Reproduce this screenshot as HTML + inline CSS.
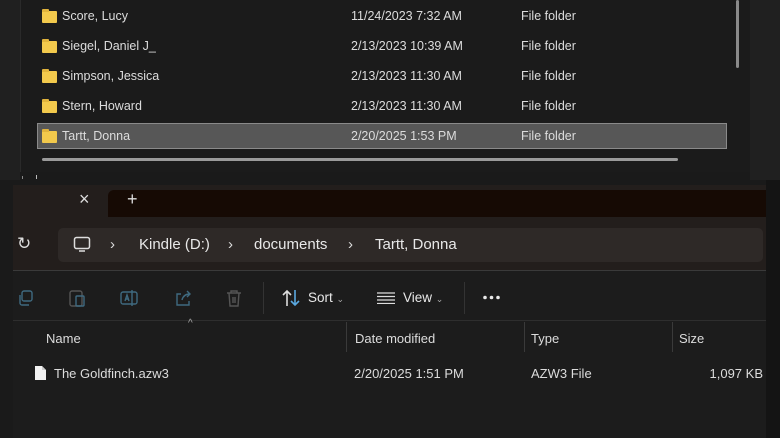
<!DOCTYPE html>
<html><head><style>
*{margin:0;padding:0;box-sizing:border-box}
body{width:780px;height:438px;background:#1a1a1a;position:relative;overflow:hidden;font-family:"Liberation Sans",sans-serif;color:#e8e8e8}
.a{position:absolute}
.t{font-size:12.5px;color:#dcdcdc;white-space:nowrap}
.fold{position:absolute;width:15px;height:12px;background:#f2c94c;border-radius:1px}
.fold:before{content:"";position:absolute;left:0;top:-2px;width:7px;height:3px;background:#e0b33c;border-radius:1px 1px 0 0}
</style></head><body>
<div class="a" style="left:0;top:0;width:20px;height:180px;background:#202020"></div>
<div class="a" style="left:20px;top:0;width:730px;height:172px;background:#1b1b1b;border-left:1px solid #2a2a2a"></div>
<div class="a" style="left:750px;top:0;width:30px;height:180px;background:#202020"></div>
<div class="a" style="left:736px;top:0;width:3px;height:68px;background:#8a8a8a;border-radius:2px"></div>
<div class="a" style="left:37px;top:123px;width:690px;height:26px;background:#575757;border:1px solid #8a8a8a"></div>
<div class="a" style="left:42px;top:158px;width:636px;height:3px;background:#9a9a9a;border-radius:2px"></div>
<div class="a" style="left:22px;top:176px;width:1px;height:3px;background:#888"></div>
<div class="a" style="left:36px;top:175px;width:1px;height:4px;background:#bbb"></div>
<div class="fold" style="left:42px;top:11px"></div><div class="a t" style="left:62px;top:9px">Score, Lucy</div><div class="a t" style="left:351px;top:9px">11/24/2023 7:32 AM</div><div class="a t" style="left:521px;top:9px">File folder</div>
<div class="fold" style="left:42px;top:41px"></div><div class="a t" style="left:62px;top:39px">Siegel, Daniel J_</div><div class="a t" style="left:351px;top:39px">2/13/2023 10:39 AM</div><div class="a t" style="left:521px;top:39px">File folder</div>
<div class="fold" style="left:42px;top:71px"></div><div class="a t" style="left:62px;top:69px">Simpson, Jessica</div><div class="a t" style="left:351px;top:69px">2/13/2023 11:30 AM</div><div class="a t" style="left:521px;top:69px">File folder</div>
<div class="fold" style="left:42px;top:101px"></div><div class="a t" style="left:62px;top:99px">Stern, Howard</div><div class="a t" style="left:351px;top:99px">2/13/2023 11:30 AM</div><div class="a t" style="left:521px;top:99px">File folder</div>
<div class="fold" style="left:42px;top:131px"></div><div class="a t" style="left:62px;top:129px">Tartt, Donna</div><div class="a t" style="left:351px;top:129px">2/20/2025 1:53 PM</div><div class="a t" style="left:521px;top:129px">File folder</div>
<div class="a" style="left:13px;top:185px;width:753px;height:90px;background:#231e1c"></div>
<div class="a" style="left:108px;top:190px;width:658px;height:27px;background:#160a04;border-radius:6px 0 0 0"></div>
<div class="a" style="left:79px;top:189px;font-size:18px;color:#ddd">×</div>
<div class="a" style="left:127px;top:189px;font-size:18px;color:#ddd">+</div>
<div class="a" style="left:58px;top:228px;width:705px;height:34px;background:#2e2927;border-radius:5px"></div>
<div class="a" style="left:17px;top:234px;font-size:17px;color:#ddd">↻</div>
<svg class="a" style="left:73px;top:236px" width="18" height="17"><rect x="1.5" y="1.5" width="15" height="11" rx="2" fill="none" stroke="#ddd" stroke-width="1.5"/><path d="M6 15h6" stroke="#ddd" stroke-width="1.5"/></svg>
<div class="a" style="top:236px;left:110px;font-size:15px;color:#ddd">›</div>
<div class="a" style="top:236px;left:139px;font-size:15px;color:#e8e8e8">Kindle (D:)</div>
<div class="a" style="top:236px;left:228px;font-size:15px;color:#ddd">›</div>
<div class="a" style="top:236px;left:254px;font-size:15px;color:#e8e8e8">documents</div>
<div class="a" style="top:236px;left:348px;font-size:15px;color:#ddd">›</div>
<div class="a" style="top:236px;left:375px;font-size:15px;color:#e8e8e8">Tartt, Donna</div>
<div class="a" style="left:13px;top:270px;width:753px;height:1px;background:#3a3a3a"></div>
<div class="a" style="left:13px;top:271px;width:753px;height:167px;background:#1c1c1c"></div>
<div class="a" style="left:766px;top:180px;width:14px;height:258px;background:#141414"></div>
<svg class="a" style="left:16px;top:289px" width="18" height="18" fill="none" stroke="#3f6a80" stroke-width="1.4"><rect x="6" y="2" width="10" height="10" rx="2"/><path d="M4 6v8a2 2 0 0 0 2 2h7"/></svg>
<svg class="a" style="left:68px;top:288px" width="18" height="20" fill="none" stroke="#555" stroke-width="1.4"><rect x="2" y="3" width="12" height="15" rx="2"/><rect x="8" y="8" width="8" height="10" rx="1" stroke="#3f6a80"/></svg>
<svg class="a" style="left:119px;top:288px" width="20" height="20" fill="none" stroke="#3f6a80" stroke-width="1.4"><rect x="2" y="4" width="16" height="12" rx="2"/><path d="M6 13l2-6 2 6M7 11h2M13 2v16"/></svg>
<svg class="a" style="left:173px;top:288px" width="20" height="20" fill="none" stroke="#3f6a80" stroke-width="1.4"><path d="M8 6H4v11h12v-4"/><path d="M9 12c1-4 4-6 8-6M14 3l3 3-3 3"/></svg>
<svg class="a" style="left:225px;top:288px" width="18" height="20" fill="none" stroke="#555" stroke-width="1.4"><path d="M2 5h14M6 5V3h6v2M4 5l1 13h8l1-13M8 9v6M10 9v6"/></svg>
<div class="a" style="left:263px;top:282px;width:1px;height:32px;background:#333"></div>
<svg class="a" style="left:281px;top:288px" width="20" height="20" fill="none" stroke-width="1.6"><path d="M6 18V3M2 7l4-4 4 4" stroke="#ddd"/><path d="M14 2v15M10 13l4 4 4-4" stroke="#5aa8e0"/></svg>
<div class="a" style="left:308px;top:290px;font-size:13.5px">Sort <span style="font-size:9px;color:#aaa">⌄</span></div>
<svg class="a" style="left:377px;top:292px" width="18" height="12" stroke="#ddd" stroke-width="1.3"><path d="M0 1h18M0 4.5h18M0 8h18M0 11.5h18"/></svg>
<div class="a" style="left:403px;top:290px;font-size:13.5px">View <span style="font-size:9px;color:#aaa">⌄</span></div>
<div class="a" style="left:464px;top:282px;width:1px;height:32px;background:#333"></div>
<svg class="a" style="left:482px;top:295px" width="20" height="5" fill="#e8e8e8"><circle cx="3" cy="2.5" r="1.8"/><circle cx="9.5" cy="2.5" r="1.8"/><circle cx="16" cy="2.5" r="1.8"/></svg>
<div class="a" style="left:13px;top:320px;width:753px;height:1px;background:#2e2e2e"></div>
<div class="a" style="left:188px;top:318px;font-size:10px;color:#aaa">^</div>
<div class="a" style="left:346px;top:322px;width:1px;height:30px;background:#3a3a3a"></div>
<div class="a" style="left:524px;top:322px;width:1px;height:30px;background:#3a3a3a"></div>
<div class="a" style="left:672px;top:322px;width:1px;height:30px;background:#3a3a3a"></div>
<div class="a t" style="left:46px;top:331px;font-size:13px">Name</div>
<div class="a t" style="left:355px;top:331px;font-size:13px">Date modified</div>
<div class="a t" style="left:531px;top:331px;font-size:13px">Type</div>
<div class="a t" style="left:679px;top:331px;font-size:13px">Size</div>
<svg class="a" style="left:34px;top:365px" width="13" height="16"><path d="M1 1h7l4 4v10H1z" fill="#f2f2f2"/><path d="M8 1v4h4" fill="#ccc"/></svg>
<div class="a t" style="left:54px;top:366px;font-size:13px">The Goldfinch.azw3</div>
<div class="a t" style="left:354px;top:366px;font-size:13px">2/20/2025 1:51 PM</div>
<div class="a t" style="left:531px;top:366px;font-size:13px">AZW3 File</div>
<div class="a t" style="right:17px;top:366px;font-size:13px">1,097 KB</div>
</body></html>
